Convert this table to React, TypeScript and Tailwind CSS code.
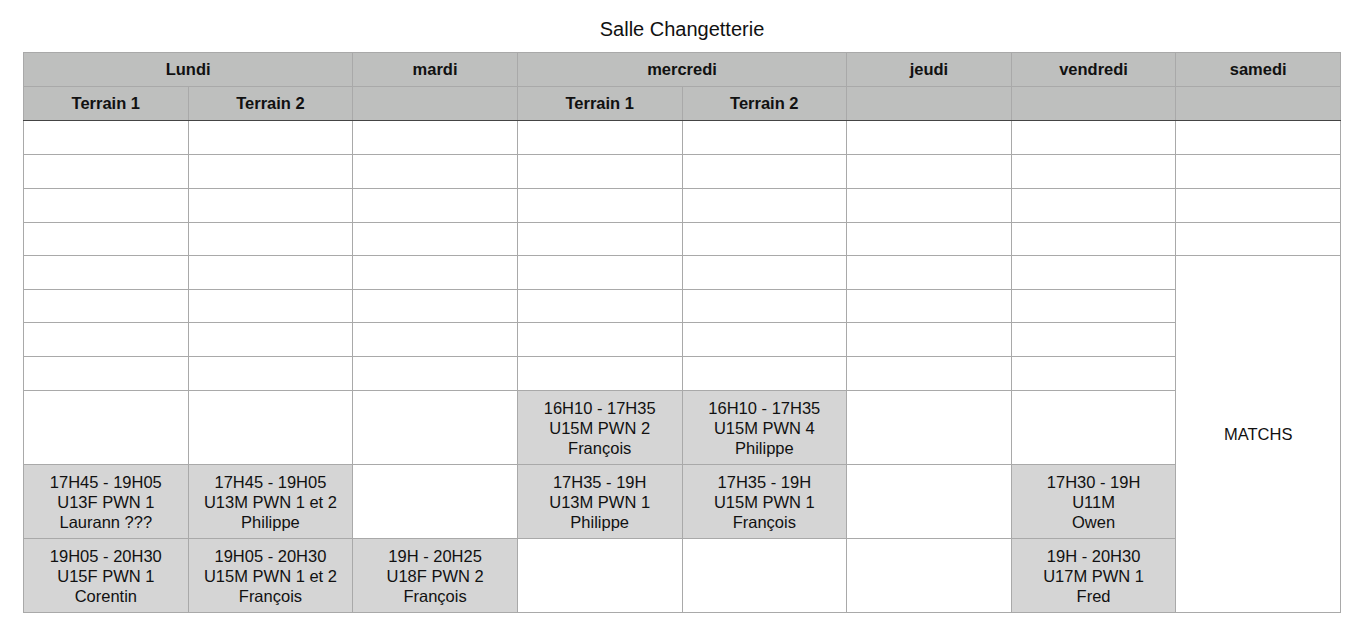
type Slot = { time: string; team: string; coach: string } | null;

const days = [
  { name: "Lundi", span: 2 },
  { name: "mardi", span: 1 },
  { name: "mercredi", span: 2 },
  { name: "jeudi", span: 1 },
  { name: "vendredi", span: 1 },
  { name: "samedi", span: 1 },
];

const subHeads = ["Terrain 1", "Terrain 2", "", "Terrain 1", "Terrain 2", "", "", ""];

const smallRows = [34, 34, 34, 33, 34, 33, 34, 34];

// 7 columns (samedi is covered by the MATCHS cell)
const bigRows: Slot[][] = [
  [
    null,
    null,
    null,
    { time: "16H10 - 17H35", team: "U15M PWN 2", coach: "François" },
    { time: "16H10 - 17H35", team: "U15M PWN 4", coach: "Philippe" },
    null,
    null,
  ],
  [
    { time: "17H45 - 19H05", team: "U13F PWN 1", coach: "Laurann ???" },
    { time: "17H45 - 19H05", team: "U13M PWN 1 et 2", coach: "Philippe" },
    null,
    { time: "17H35 - 19H", team: "U13M PWN 1", coach: "Philippe" },
    { time: "17H35 - 19H", team: "U15M PWN 1", coach: "François" },
    null,
    { time: "17H30 - 19H", team: "U11M", coach: "Owen" },
  ],
  [
    { time: "19H05 - 20H30", team: "U15F PWN 1", coach: "Corentin" },
    { time: "19H05 - 20H30", team: "U15M PWN 1 et 2", coach: "François" },
    { time: "19H - 20H25", team: "U18F PWN 2", coach: "François" },
    null,
    null,
    null,
    { time: "19H - 20H30", team: "U17M PWN 1", coach: "Fred" },
  ],
];

function SlotCell({ slot }: { slot: Slot }) {
  if (!slot) return <td className="border border-[#a9a9a9] bg-white" />;
  return (
    <td className="border border-[#a9a9a9] bg-[#d5d5d5] text-center align-middle leading-[20px]">
      <div>{slot.time}</div>
      <div>{slot.team}</div>
      <div>{slot.coach}</div>
    </td>
  );
}

export default function App() {
  return (
    <div
      className="min-h-[639px] w-[1358px] bg-white text-[#111] text-[16.5px]"
      style={{ fontFamily: '"Liberation Sans", Arial, sans-serif' }}
    >
      <div className="pl-[23px] pt-[17px]">
        <h1 className="w-[1318px] text-center text-[20px] leading-[24px] mb-[11px]">
          Salle Changetterie
        </h1>
        <table className="w-[1318px] table-fixed border-collapse">
          <thead>
            <tr className="h-[34px] bg-[#bebfbe]">
              {days.map((d) => (
                <th
                  key={d.name}
                  colSpan={d.span}
                  className="border border-[#a9a9a9] font-bold text-center"
                >
                  {d.name}
                </th>
              ))}
            </tr>
            <tr className="h-[34px] bg-[#bebfbe]">
              {subHeads.map((s, i) => (
                <th
                  key={i}
                  className="border border-[#a9a9a9] border-b-[#444] font-bold text-center"
                >
                  {s}
                </th>
              ))}
            </tr>
          </thead>
          <tbody>
            {smallRows.map((h, r) => (
              <tr key={r} style={{ height: h }}>
                {Array.from({ length: 7 }).map((_, c) => (
                  <td key={c} className="border border-[#a9a9a9]" />
                ))}
                {r < 4 && <td className="border border-[#a9a9a9]" />}
                {r === 4 && (
                  <td
                    rowSpan={7}
                    className="border border-[#a9a9a9] text-center align-middle"
                  >
                    MATCHS
                  </td>
                )}
              </tr>
            ))}
            {bigRows.map((row, r) => (
              <tr key={r} className="h-[74px]">
                {row.map((slot, c) => (
                  <SlotCell key={c} slot={slot} />
                ))}
              </tr>
            ))}
          </tbody>
        </table>
      </div>
    </div>
  );
}
